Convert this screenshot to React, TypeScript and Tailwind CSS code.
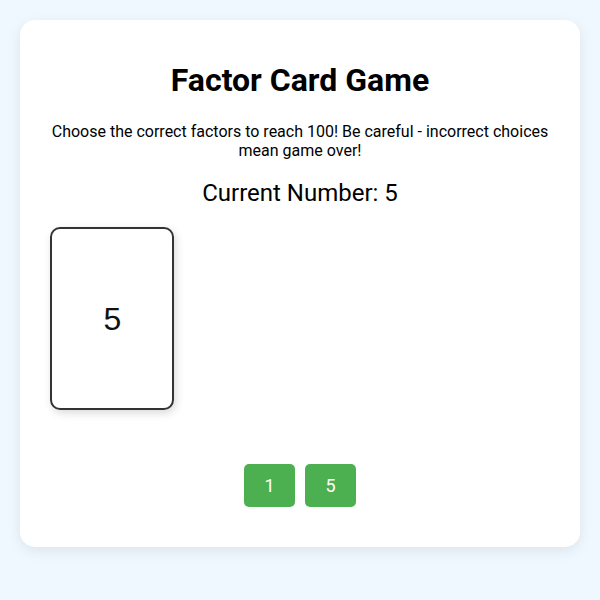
import React from 'react';

const numbers = [1, 5];

const App: React.FC = () => {
  const current = 5;

  return (
    <div className="min-h-[600px] bg-[#f0f8ff] pt-[20px] px-[20px] font-['Roboto',sans-serif] text-black">
      <div className="bg-white rounded-[15px] shadow-[0_4px_14px_rgba(0,0,0,0.08)] px-[30px] pt-[30px] pb-[40px]">
        <h1 className="mt-[11px] text-center text-[32px] leading-[38px] font-bold">Factor Card Game</h1>
        <p className="mt-[23px] text-center text-[16px] leading-[19px]">
          Choose the correct factors to reach 100! Be careful - incorrect choices mean game over!
        </p>
        <div className="mt-[19px] text-center text-[24px] leading-[28px]">Current Number: {current}</div>

        {/* played cards */}
        <div className="mt-[20px] flex flex-wrap gap-[10px]">
          <div className="w-[124px] h-[183px] border-2 border-[#333] rounded-[10px] bg-white shadow-[2px_3px_8px_rgba(0,0,0,0.15)] flex items-center justify-center pl-[1px] font-['Liberation_Sans',Arial,sans-serif] text-[32px] text-[#111]">
            5
          </div>
        </div>

        <div className="mt-[54px] flex justify-center gap-[10px]">
          {numbers.map((n) => (
            <button
              key={n}
              className="w-[51px] h-[43px] rounded-[5px] bg-[#4caf50] text-white text-[18px] flex items-center justify-center"
            >
              {n}
            </button>
          ))}
        </div>
      </div>
    </div>
  );
};

export default App;
